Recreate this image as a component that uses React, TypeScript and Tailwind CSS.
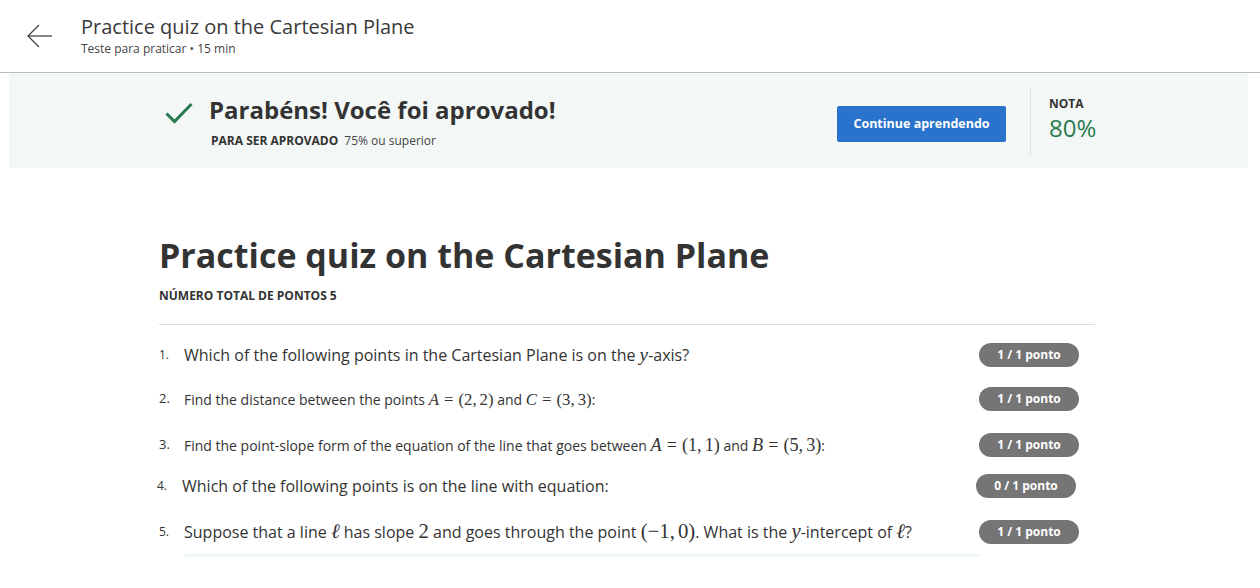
import React from "react";

const Mth = ({ children, big = false }: { children: React.ReactNode; big?: boolean }) => (
  <span
    className={`font-['Liberation_Serif',serif] ${big ? "text-[1.3em]" : "text-[1.2em]"} leading-none whitespace-nowrap`}
  >
    {children}
  </span>
);
const V = ({ children }: { children: React.ReactNode }) => <span className="italic">{children}</span>;
const Eq = () => <span className="mx-[5px]">=</span>;
const C = () => <span className="mr-[3px]">,</span>;

function Badge({ text, shift = false }: { text: string; shift?: boolean }) {
  return (
    <div
      className={`h-[24px] w-[100px] rounded-full bg-[#757575] text-white text-[12px] font-bold flex items-center justify-center ${
        shift ? "mr-[19px]" : "mr-[16px]"
      }`}
    >
      {text}
    </div>
  );
}

export default function App() {
  return (
    <div className="w-[1260px] h-[588px] bg-white overflow-hidden font-['Open_Sans',sans-serif] text-[#333]">
      {/* header */}
      <div className="h-[73px] border-b border-[#bdbdbd] flex items-start">
        <div className="w-[81px] flex justify-start pl-[26px] pt-[24px]">
          <svg width="28" height="24" viewBox="0 0 28 24" fill="none" stroke="#444" strokeWidth="1.3">
            <path d="M26 12H2" />
            <path d="M13 1L2 12l11 11" />
          </svg>
        </div>
        <div className="pt-[13px]">
          <div className="text-[20px] leading-[28px] text-[#3a3a3a]">Practice quiz on the Cartesian Plane</div>
          <div className="text-[12px] leading-[16px] text-[#444]">Teste para praticar • 15 min</div>
        </div>
      </div>

      {/* banner */}
      <div className="ml-[9px] mr-[12px] h-[95px] bg-[#f3f8f7] flex items-center">
        <div className="pl-[156px] flex items-start w-[828px]">
          <svg width="28" height="22" viewBox="0 0 28 22" fill="none" stroke="#2a7a4f" strokeWidth="3" className="mt-[10px]">
            <path d="M1.5 11.5l8 8L26.5 2" />
          </svg>
          <div className="ml-[16px] mt-[1px]">
            <div className="text-[24px] leading-[34px] font-bold text-[#333]">Parabéns! Você foi aprovado!</div>
            <div className="mt-[5px] ml-[2px] text-[12px] leading-[18px]">
              <span className="font-bold">PARA SER APROVADO</span>
              <span className="ml-[6px] text-[#444]">75% ou superior</span>
            </div>
          </div>
        </div>
        <button className="mt-[7px] h-[36px] w-[169px] bg-[#2a73cc] rounded-[2px] text-white text-[12.5px] font-bold">
          Continue aprendendo
        </button>
        <div className="ml-[24px] h-[67px] w-px bg-[#e0e0e0] self-center" />
        <div className="ml-[18px] flex flex-col">
          <div className="text-[12px] leading-[14px] font-bold text-[#333]">NOTA</div>
          <div className="text-[24px] leading-[33px] text-[#2a7a4f]">80%</div>
        </div>
      </div>

      {/* main */}
      <div className="ml-[159px] w-[936px] pt-[63px]">
        <h1 className="text-[34px] leading-[48px] font-bold text-[#333]">Practice quiz on the Cartesian Plane</h1>
        <div className="mt-[9px] text-[12px] leading-[16px] font-bold text-[#333]">NÚMERO TOTAL DE PONTOS 5</div>
        <div className="mt-[20px] border-t border-[#dcdcdc]" />

        <div className="flex items-center justify-between h-[24px] mt-[18px]">
          <div className="flex items-center text-[16px] text-[#333]">
            <span className="w-[25px] text-[12px]">1.</span>
            <span>
              Which of the following points in the Cartesian Plane is on the{" "}
              <Mth>
                <V>y</V>
              </Mth>
              -axis?
            </span>
          </div>
          <Badge text="1 / 1 ponto" />
        </div>

        <div className="flex items-center justify-between h-[24px] mt-[20px]">
          <div className="flex items-center text-[14px] text-[#333]">
            <span className="w-[25px] text-[13px]">2.</span>
            <span>
              Find the distance between the points{" "}
              <Mth>
                <V>A</V>
                <Eq />
                (2<C />2)
              </Mth>{" "}
              and{" "}
              <Mth>
                <V>C</V>
                <Eq />
                (3<C />3)
              </Mth>
              :
            </span>
          </div>
          <Badge text="1 / 1 ponto" />
        </div>

        <div className="flex items-center justify-between h-[24px] mt-[22px]">
          <div className="flex items-center text-[14px] text-[#333]">
            <span className="w-[25px] text-[13px]">3.</span>
            <span>
              Find the point-slope form of the equation of the line that goes between{" "}
              <Mth big>
                <V>A</V>
                <Eq />
                (1<C />1)
              </Mth>{" "}
              and{" "}
              <Mth big>
                <V>B</V>
                <Eq />
                (5<C />3)
              </Mth>
              :
            </span>
          </div>
          <Badge text="1 / 1 ponto" />
        </div>

        <div className="flex items-center justify-between h-[24px] mt-[17px] -ml-[2px]">
          <div className="flex items-center text-[16px] text-[#333]">
            <span className="w-[25px] text-[12px]">4.</span>
            <span>Which of the following points is on the line with equation:</span>
          </div>
          <Badge text="0 / 1 ponto" shift />
        </div>

        <div className="flex items-center justify-between h-[24px] mt-[22px]">
          <div className="flex items-center text-[16px] text-[#333]">
            <span className="w-[25px] text-[12px]">5.</span>
            <span>
              Suppose that a line{" "}
              <Mth big>
                <V>ℓ</V>
              </Mth>{" "}
              has slope <Mth big>2</Mth> and goes through the point{" "}
              <Mth big>
                (−1<C />0)
              </Mth>
              . What is the{" "}
              <Mth big>
                <V>y</V>
              </Mth>
              -intercept of{" "}
              <Mth big>
                <V>ℓ</V>
              </Mth>
              ?
            </span>
          </div>
          <Badge text="1 / 1 ponto" />
        </div>

        <div className="ml-[26px] mt-[10px] w-[796px] h-[3px] bg-[#f0f8f6]" />
      </div>
    </div>
  );
}
